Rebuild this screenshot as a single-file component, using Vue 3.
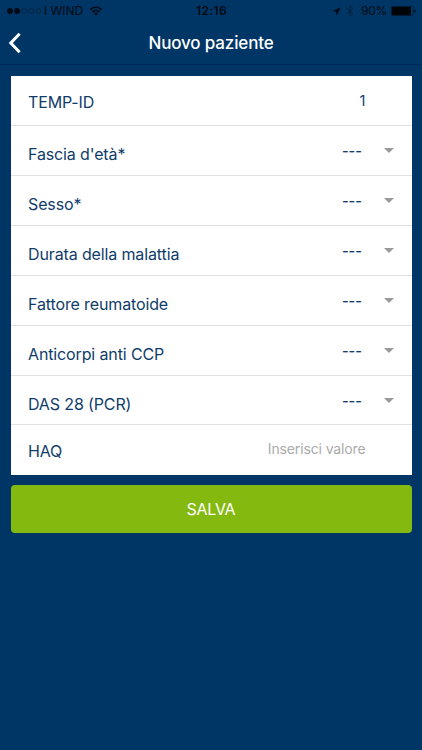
<script setup>
const fields = [
  { label: 'TEMP-ID', value: '1', type: 'plain' },
  { label: "Fascia d'età*", type: 'select' },
  { label: 'Sesso*', type: 'select' },
  { label: 'Durata della malattia', type: 'select' },
  { label: 'Fattore reumatoide', type: 'select' },
  { label: 'Anticorpi anti CCP', type: 'select' },
  { label: 'DAS 28 (PCR)', type: 'select' },
  { label: 'HAQ', value: 'Inserisci valore', type: 'input' }
]
</script>

<template>
  <div class="screen">
    <div class="status">
      <div class="carrier">
        <svg class="dots" width="36" height="8" viewBox="0 0 36 8">
          <circle cx="3" cy="4" r="2.9" fill="#000a14" />
          <circle cx="10.1" cy="4" r="2.9" fill="#000a14" />
          <g fill="none" stroke="#001c38" stroke-width=".7">
            <circle cx="17.2" cy="4" r="2.5" />
            <circle cx="24.3" cy="4" r="2.5" />
            <circle cx="31.4" cy="4" r="2.5" />
          </g>
        </svg>
        <span class="network">I WIND</span>
        <svg class="wifi" width="14" height="10" viewBox="0 0 14 10" fill="none" stroke="#000a14" stroke-width="1.6">
          <path d="M1.2 3.6C4.5.4 9.5.4 12.8 3.6" />
          <path d="M3.3 5.9C5.4 3.9 8.6 3.9 10.7 5.9" />
          <path d="M7 9.4 4.9 7.4Q7 5.7 9.1 7.4Z" fill="#000a14" stroke="none" />
        </svg>
      </div>
      <span class="clock">12:16</span>
      <div class="power">
        <svg width="9" height="9" viewBox="0 0 9 9"><path d="M8.8.2.2 4.3l4.1.4.4 4.1Z" fill="#000a14" /></svg>
        <svg class="bluetooth" width="8" height="12" viewBox="0 0 8 12" fill="none" stroke="#00203f" stroke-width="1">
          <path d="M.8 3.2 7 8.6 4 11.2V.8l3 2.6L.8 8.8" />
        </svg>
        <span class="percent">90%</span>
        <svg class="battery" width="25" height="10" viewBox="0 0 25 10">
          <rect x=".4" y=".4" width="21.8" height="9.2" rx="1.2" fill="none" stroke="#001c38" stroke-width=".7" />
          <rect x=".8" y=".8" width="19.2" height="8.4" rx=".5" fill="#000508" />
          <path d="M23.3 3.3q1.4.2 1.4 1.7t-1.4 1.7Z" fill="#000a14" />
        </svg>
      </div>
    </div>

    <header class="nav">
      <svg class="back" width="14" height="22" viewBox="0 0 14 22">
        <path d="M11.6 1.8 2.8 11l8.8 9.2" fill="none" stroke="#fff" stroke-width="3" />
      </svg>
      <h1>Nuovo paziente</h1>
    </header>

    <main>
      <div class="card">
        <div v-for="field in fields" :key="field.label" class="row" :class="field.type">
          <span class="label">{{ field.label }}</span>
          <span class="value">{{ field.type === 'select' ? '---' : field.value }}</span>
          <svg v-if="field.type === 'select'" class="arrow" width="10" height="5" viewBox="0 0 10 5">
            <path d="M0 0h10L5 5Z" fill="#999" />
          </svg>
        </div>
      </div>
      <button class="save">SALVA</button>
    </main>
  </div>
</template>

<style>
body {
  background: #003665;
}
</style>

<style scoped>
.screen {
  height: 750px;
  overflow: hidden;
  background: #003665;
  font-family: Inter, "Liberation Sans", sans-serif;
  color: #103c6a;
}
.status {
  display: grid;
  grid-template-columns: 1fr auto 1fr;
  align-items: center;
  height: 22px;
  padding: 0 6px 0 7px;
  color: #000a14;
  font-size: 12px;
  line-height: 22px;
}
.carrier,
.power {
  display: flex;
  align-items: center;
}
.network {
  margin-left: 1px;
  letter-spacing: -0.05px;
}
.wifi {
  margin-left: 6px;
}
.clock {
  font-size: 12px;
  font-weight: 600;
  letter-spacing: 0.4px;
}
.power {
  justify-content: flex-end;
}
.bluetooth {
  margin-left: 5px;
}
.percent {
  margin-left: 7px;
  letter-spacing: -0.3px;
}
.battery {
  margin-left: 4px;
}
.nav {
  display: grid;
  grid-template-columns: 50px 1fr 50px;
  align-items: center;
  height: 43px;
  box-sizing: border-box;
  border-bottom: 1px solid #002b54;
}
.back {
  margin-left: 8px;
}
h1 {
  margin: 0;
  text-align: center;
  color: #fff;
  font-size: 17px;
  font-weight: 450;
  line-height: 22px;
  letter-spacing: -0.15px;
}
main {
  padding: 11px 10.5px 0;
}
.card {
  background: #fff;
}
.row {
  display: flex;
  align-items: flex-start;
  height: 49.93px;
  box-sizing: border-box;
  padding: 0 17.5px;
  border-bottom: 1px solid #dfe1e4;
}
.row:last-child {
  border-bottom: 0;
}
.label {
  flex: 1;
  padding-top: 16px;
  font-size: 16px;
  line-height: 20px;
  letter-spacing: -0.13px;
}
.select .label {
  padding-top: 18px;
}
.value {
  padding-top: 15px;
  margin-right: 28.5px;
  font-size: 14.5px;
  line-height: 20px;
}
.select .value {
  width: 20px;
  margin-right: 22px;
  font-weight: 500;
  letter-spacing: -0.1px;
}
.input .value {
  padding-top: 14px;
  color: #aaa;
  font-size: 14px;
  letter-spacing: -0.13px;
}
.arrow {
  margin-top: 22px;
}
.save {
  display: block;
  width: 100%;
  height: 48px;
  margin-top: 9.5px;
  padding: 0;
  border: 0;
  border-radius: 4px;
  background: #84b910;
  color: #fff;
  font: 400 16px/48px Inter, "Liberation Sans", sans-serif;
  letter-spacing: -0.3px;
}
</style>
